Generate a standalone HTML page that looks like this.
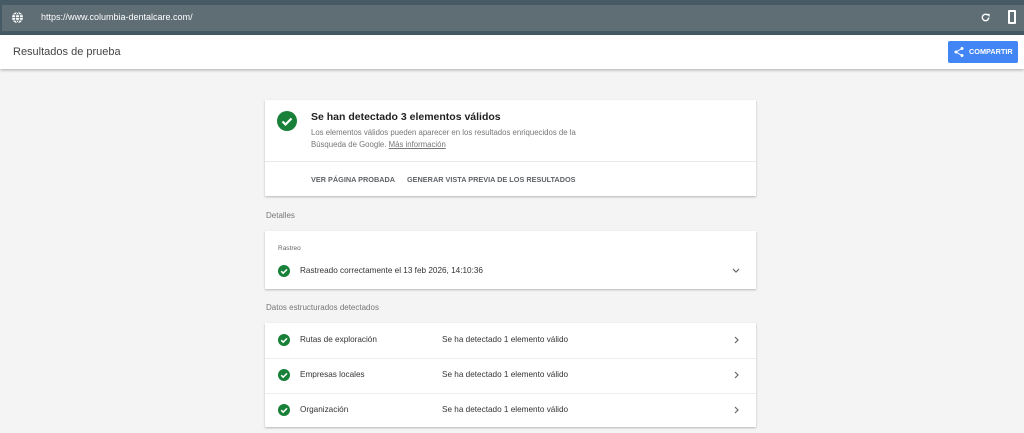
<!DOCTYPE html><html><head><style>
*{margin:0;padding:0;box-sizing:border-box}
body{width:1024px;height:433px;overflow:hidden;background:#f4f4f4;font-family:"Liberation Sans",Arial,sans-serif;position:relative;color:#333}
.a{position:absolute}
.card{position:absolute;left:265px;width:491px;background:#fff;box-shadow:0 1px 2px rgba(0,0,0,.25)}
.chk{position:absolute;width:12px;height:12px;border-radius:50%;background:#188038}
.chk svg{position:absolute;left:0;top:0}
.t{position:absolute;font-size:8.2px;color:#333;white-space:nowrap}
</style></head><body>
<div class="a" style="left:0;top:0;width:1024px;height:35px;background:#455a64"></div>
<div class="a" style="left:2px;top:5px;width:1022px;height:26px;background:#5f6d75"></div>
<svg class="a" style="left:11px;top:11px" width="13" height="13" viewBox="0 0 24 24"><circle cx="12" cy="12" r="10" fill="#fff"/><path d="M2 12h20M12 2c-3 3-4 6.5-4 10s1 7 4 10M12 2c3 3 4 6.5 4 10s-1 7-4 10M4 7h16M4 17h16" stroke="#5f6d75" stroke-width="1.6" fill="none"/></svg>
<div class="a" style="left:41px;top:12px;font-size:9px;color:#fff">https://www.columbia-dentalcare.com/</div>
<svg class="a" style="left:980px;top:12px" width="11" height="11" viewBox="0 0 24 24"><path d="M19 12a7 7 0 1 1-2-5" stroke="#fff" stroke-width="3" fill="none"/><path d="M14 4h7v7z" fill="#fff"/></svg>
<div class="a" style="left:1008px;top:10px;width:8px;height:14px;border:2px solid #fff;border-radius:1px"></div>
<div class="a" style="left:0;top:35px;width:1024px;height:34px;background:#fff;box-shadow:0 1px 3px rgba(0,0,0,.3)"></div>
<div class="a" style="left:13px;top:46px;font-size:11px;color:#444">Resultados de prueba</div>
<div class="a" style="left:948px;top:41px;width:70px;height:22px;background:#4285f4;border-radius:2px;color:#fff;font-size:7.3px;font-weight:bold;line-height:22px;padding-left:21px">COMPARTIR</div>
<svg class="a" style="left:953px;top:46px" width="12" height="12" viewBox="0 0 24 24"><circle cx="18" cy="5" r="3" fill="#fff"/><circle cx="6" cy="12" r="3" fill="#fff"/><circle cx="18" cy="19" r="3" fill="#fff"/><path d="M18 5L6 12l12 7" stroke="#fff" stroke-width="2" fill="none"/></svg>

<div class="card" style="top:100px;height:96px">
<div class="chk" style="left:12px;top:11px;width:20px;height:20px"><svg width="20" height="20" viewBox="0 0 20 20"><path d="M5.5 10.5l3 3 6-6" stroke="#fff" stroke-width="2.2" fill="none"/></svg></div>
<div class="t" style="left:46px;top:11px;font-size:10.5px;font-weight:bold;color:#222">Se han detectado 3 elementos válidos</div>
<div class="t" style="left:46px;top:27px;font-size:7.8px;color:#777;line-height:12px">Los elementos válidos pueden aparecer en los resultados enriquecidos de la<br>Búsqueda de Google. <span style="text-decoration:underline">Más información</span></div>
<div class="a" style="left:0;top:61px;width:491px;height:1px;background:#e8e8e8"></div>
<div class="t" style="left:46px;top:75px;font-size:7.3px;font-weight:bold;color:#5f6368">VER PÁGINA PROBADA</div>
<div class="t" style="left:142px;top:75px;font-size:7.3px;font-weight:bold;color:#5f6368">GENERAR VISTA PREVIA DE LOS RESULTADOS</div>
</div>
<div class="t" style="left:266px;top:211px;font-size:8px;color:#777">Detalles</div>
<div class="card" style="top:231px;height:58px">
<div class="t" style="left:13px;top:14px;font-size:6.5px;color:#666">Rastreo</div>
<div class="chk" style="left:13px;top:34px"><svg width="12" height="12"><path d="M3.2 6.2l2 2 3.8-3.8" stroke="#fff" stroke-width="1.5" fill="none"/></svg></div>
<div class="t" style="left:35px;top:35px">Rastreado correctamente el 13 feb 2026, 14:10:36</div>
<svg class="a" style="left:467px;top:37px" width="8" height="6"><path d="M1 1l3 3 3-3" stroke="#666" stroke-width="1.2" fill="none"/></svg>
</div>
<div class="t" style="left:266px;top:303px;font-size:8px;color:#777">Datos estructurados detectados</div>
<div class="card" style="top:323px;height:104px">
<div class="a" style="left:0;top:35px;width:491px;height:1px;background:#eee"></div>
<div class="a" style="left:0;top:70px;width:491px;height:1px;background:#eee"></div>
<div class="chk" style="left:13px;top:11px"><svg width="12" height="12"><path d="M3.2 6.2l2 2 3.8-3.8" stroke="#fff" stroke-width="1.5" fill="none"/></svg></div>
<div class="t" style="left:35px;top:12px">Rutas de exploración</div><div class="t" style="left:177px;top:12px">Se ha detectado 1 elemento válido</div>
<svg class="a" style="left:469px;top:13px" width="6" height="8"><path d="M1 1l3 3-3 3" stroke="#666" stroke-width="1.2" fill="none"/></svg>
<div class="chk" style="left:13px;top:46px"><svg width="12" height="12"><path d="M3.2 6.2l2 2 3.8-3.8" stroke="#fff" stroke-width="1.5" fill="none"/></svg></div>
<div class="t" style="left:35px;top:47px">Empresas locales</div><div class="t" style="left:177px;top:47px">Se ha detectado 1 elemento válido</div>
<svg class="a" style="left:469px;top:48px" width="6" height="8"><path d="M1 1l3 3-3 3" stroke="#666" stroke-width="1.2" fill="none"/></svg>
<div class="chk" style="left:13px;top:81px"><svg width="12" height="12"><path d="M3.2 6.2l2 2 3.8-3.8" stroke="#fff" stroke-width="1.5" fill="none"/></svg></div>
<div class="t" style="left:35px;top:82px">Organización</div><div class="t" style="left:177px;top:82px">Se ha detectado 1 elemento válido</div>
<svg class="a" style="left:469px;top:83px" width="6" height="8"><path d="M1 1l3 3-3 3" stroke="#666" stroke-width="1.2" fill="none"/></svg>
</div>
</body></html>
